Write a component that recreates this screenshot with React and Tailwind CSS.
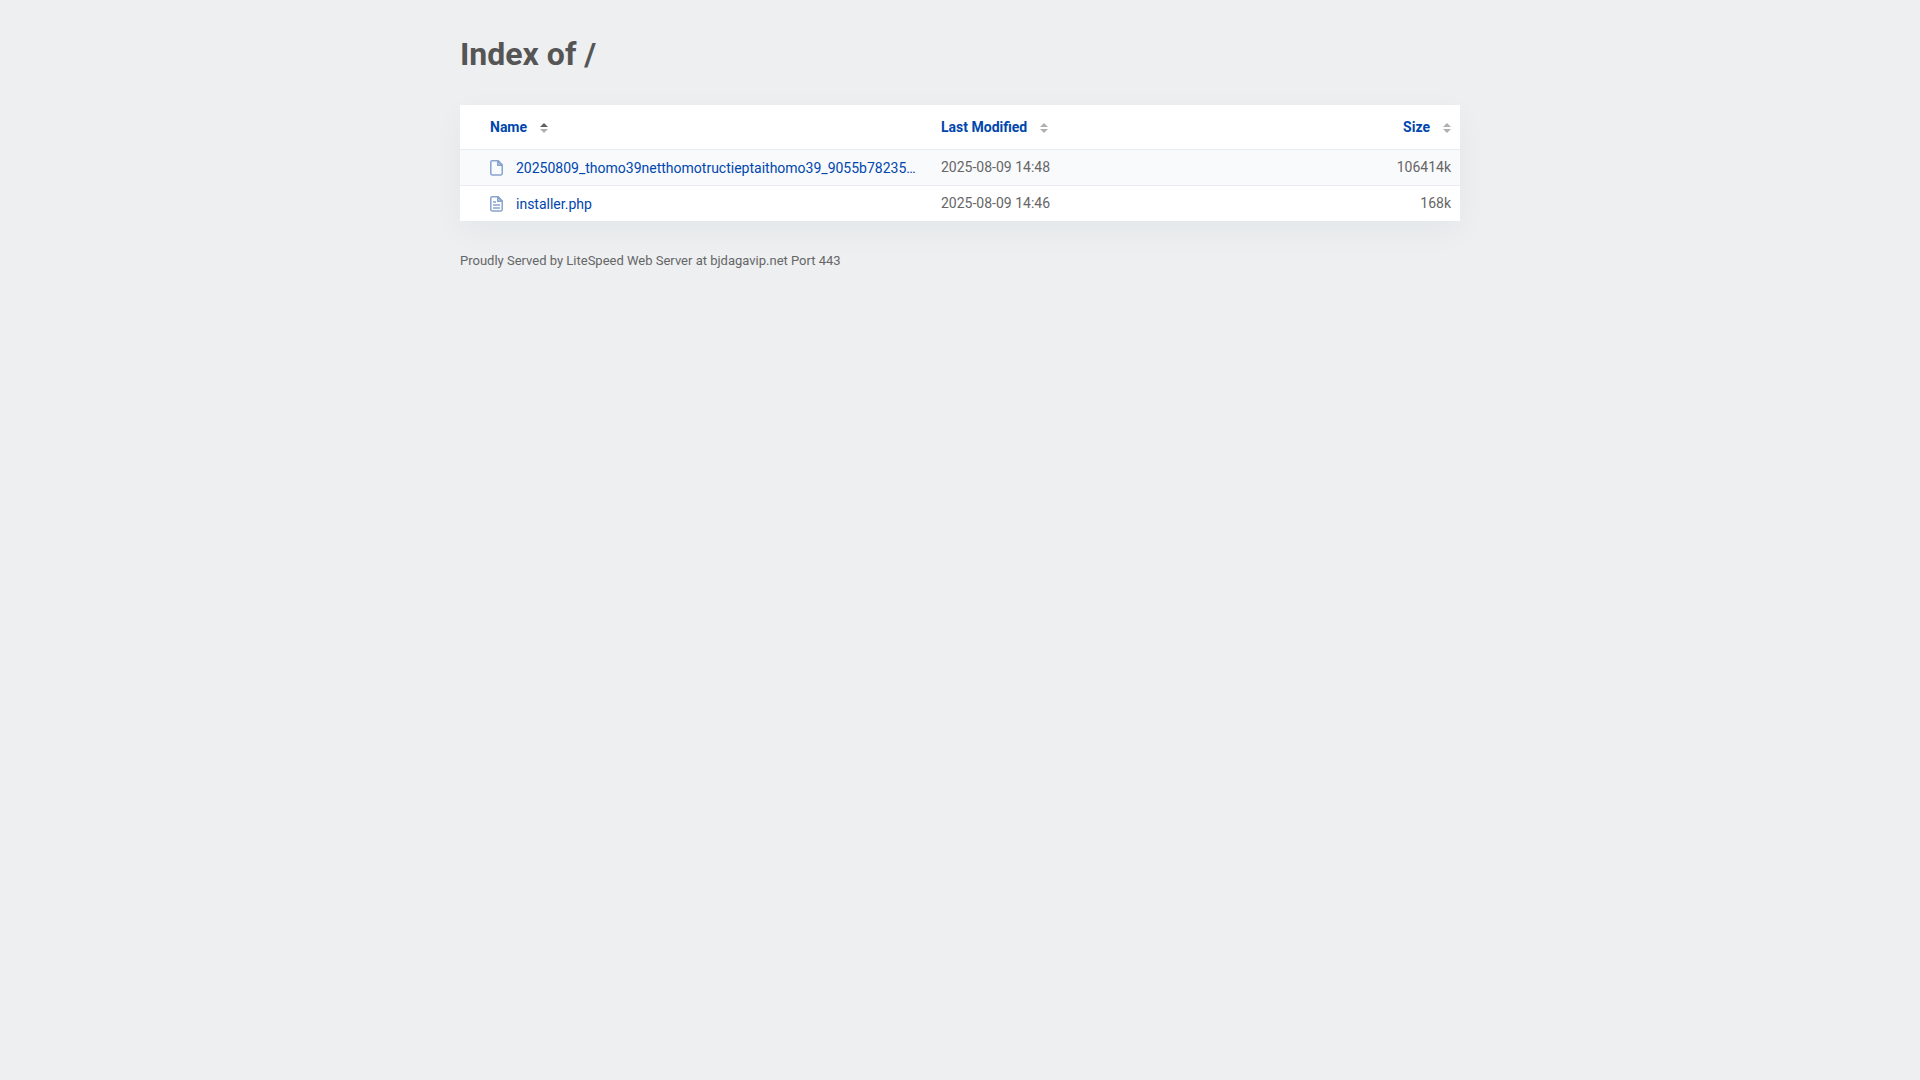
const files = [
  { name: "20250809_thomo39netthomotructieptaithomo39_9055b78235…", modified: "2025-08-09 14:48", size: "106414k", lined: false },
  { name: "installer.php", modified: "2025-08-09 14:46", size: "168k", lined: true },
];

function SortIcon({ active }) {
  return (
    <svg viewBox="0 0 8 10" className="ml-[13px] mt-0.5 h-2.5 w-2 shrink-0" aria-hidden="true">
      <path d="M4 0 L8 4 H0 Z" fill={active ? "#606060" : "#b0b0b0"} />
      <path d="M0 6 H8 L4 10 Z" fill="#b0b0b0" />
    </svg>
  );
}

function FileIcon({ lined }) {
  return (
    <svg viewBox="0 0 13 16" className="h-4 w-[13px] shrink-0" fill="none" stroke="#86a3cf" aria-hidden="true">
      <path strokeWidth="1.5" strokeLinejoin="round" d="M2 0.8 H8.3 L12.2 4.9 V13.6 Q12.2 15 10.9 15 H2.1 Q0.8 15 0.8 13.6 V2.2 Q0.8 0.8 2 0.8 Z" />
      <path fill="#86a3cf" fillOpacity="0.35" strokeWidth="1.5" d="M7.8 1 V5.2 H12.2 Z" />
      {lined && <path strokeWidth="1.5" d="M3 6 H6 M3 9 H10 M3 12 H10" />}
    </svg>
  );
}

function SortButton({ label, active }) {
  return (
    <button type="button" className="inline-flex cursor-pointer items-center font-bold text-[#0046ad]">
      {label}
      <SortIcon active={active} />
    </button>
  );
}

export default function App() {
  return (
    <div className="min-h-screen bg-[#edeff1] px-4 py-8 font-['Roboto',sans-serif] text-sm leading-5 text-[#666666]">
      <main className="mx-auto max-w-[1000px]">
        <h1 className="mb-[29px] text-[32px] font-bold leading-11 text-[#555555]">Index of /</h1>
        <table className="w-full table-fixed border-collapse bg-white shadow-[0_10px_30px_0_rgba(0,40,40,0.045)]">
          <thead>
            <tr className="h-11 border-b border-[#e9ebee]">
              <th scope="col" className="w-[47%] pl-[30px] text-left" aria-sort="ascending">
                <SortButton label="Name" active />
              </th>
              <th scope="col" className="pl-[11px] text-left">
                <SortButton label="Last Modified" />
              </th>
              <th scope="col" className="w-[15%] pr-[9px] text-right">
                <SortButton label="Size" />
              </th>
            </tr>
          </thead>
          <tbody>
            {files.map((file) => (
              <tr key={file.name} className="h-9 border-[#e9ebee] odd:border-b odd:bg-[#f9fafc]">
                <td className="pl-[30px] pt-0.5">
                  <a href="#" className="flex items-center gap-[13px] text-[#0046ad]">
                    <FileIcon lined={file.lined} />
                    <span className="truncate">{file.name}</span>
                  </a>
                </td>
                <td className="pl-[11px]">{file.modified}</td>
                <td className="pr-[9px] text-right">{file.size}</td>
              </tr>
            ))}
          </tbody>
        </table>
        <footer className="pt-[30px] text-[13px]">Proudly Served by LiteSpeed Web Server at bjdagavip.net Port 443</footer>
      </main>
    </div>
  );
}
